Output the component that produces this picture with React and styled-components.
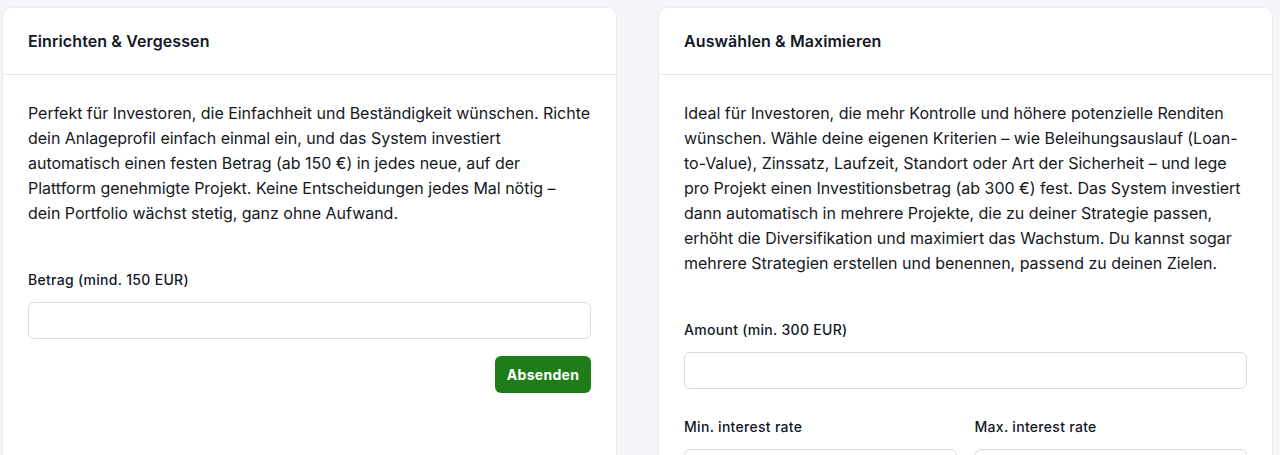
import React from "react";
import styled, { createGlobalStyle } from "styled-components";

const GlobalStyle = createGlobalStyle`
  html, body {
    margin: 0;
    padding: 0;
    background: #f3f5f9;
  }
  body {
    font-family: Inter, "Noto Sans", "Liberation Sans", sans-serif;
    color: #16181d;
    -webkit-font-smoothing: antialiased;
  }
`;

const Page = styled.div`
  display: grid;
  grid-template-columns: 613px 613px;
  column-gap: 43px;
  padding: 8px 8px 0 3px;
  height: 447px;
  overflow: hidden;
`;

const Card = styled.section`
  background: #ffffff;
  border-radius: 8px;
  box-shadow: 0 1px 2px rgba(16, 24, 40, 0.05), 0 0 0 1px rgba(16, 24, 40, 0.03);
  display: flex;
  flex-direction: column;
  min-height: 600px;
`;

const CardHeader = styled.header`
  height: 66px;
  display: flex;
  align-items: center;
  padding: 0 25px;
  border-bottom: 1px solid #e6e8ec;
`;

const Title = styled.h2`
  margin: 0;
  font-size: 16px;
  font-weight: 600;
  color: #111827;
  letter-spacing: 0.1px;
`;

const CardBody = styled.div`
  padding: 26px 25px 0;
  display: flex;
  flex-direction: column;
`;

const Text = styled.p`
  margin: 0 0 44px;
  font-size: 16px;
  line-height: 25px;
  color: #16181d;
  letter-spacing: -0.02px;
`;

const Field = styled.div`
  display: flex;
  flex-direction: column;
  margin-bottom: ${(p) => p.$gap || 0}px;
`;

const Label = styled.label`
  font-size: 14px;
  line-height: 20px;
  font-weight: 500;
  color: #111827;
  letter-spacing: 0.3px;
  margin-bottom: 12px;
`;

const Input = styled.input`
  box-sizing: border-box;
  height: 37px;
  width: 100%;
  border: 1px solid #d8dbe0;
  border-radius: 6px;
  background: #fff;
  padding: 0 12px;
  font: inherit;
  font-size: 14px;
  &:focus {
    outline: none;
    border-color: #9ca3af;
  }
`;

const Row = styled.div`
  display: grid;
  grid-template-columns: 1fr 1fr;
  column-gap: 18px;
`;

const Actions = styled.div`
  display: flex;
  justify-content: flex-end;
  margin-top: 17px;
`;

const SubmitButton = styled.button`
  height: 37px;
  width: 96px;
  border: none;
  border-radius: 6px;
  background: #1f7d19;
  color: #ffffff;
  font-family: inherit;
  font-size: 14px;
  font-weight: 700;
  letter-spacing: 0.3px;
  cursor: pointer;
`;

export default function App() {
  return (
    <>
      <GlobalStyle />
      <Page>
        <Card>
          <CardHeader>
            <Title>Einrichten &amp; Vergessen</Title>
          </CardHeader>
          <CardBody>
            <Text>
              Perfekt für Investoren, die Einfachheit und Beständigkeit wünschen.
              Richte dein Anlageprofil einfach einmal ein, und das System
              investiert automatisch einen festen Betrag (ab 150 €) in jedes
              neue, auf der Plattform genehmigte Projekt. Keine Entscheidungen
              jedes Mal nötig – dein Portfolio wächst stetig, ganz ohne Aufwand.
            </Text>
            <Field>
              <Label>Betrag (mind. 150 EUR)</Label>
              <Input type="text" />
            </Field>
            <Actions>
              <SubmitButton type="button">Absenden</SubmitButton>
            </Actions>
          </CardBody>
        </Card>

        <Card>
          <CardHeader>
            <Title>Auswählen &amp; Maximieren</Title>
          </CardHeader>
          <CardBody>
            <Text>
              Ideal für Investoren, die mehr Kontrolle und höhere potenzielle
              Renditen wünschen. Wähle deine eigenen Kriterien – wie
              Beleihungsauslauf (Loan-to-Value), Zinssatz, Laufzeit, Standort
              oder Art der Sicherheit – und lege pro Projekt einen
              Investitionsbetrag (ab 300 €) fest. Das System investiert dann
              automatisch in mehrere Projekte, die zu deiner Strategie passen,
              erhöht die Diversifikation und maximiert das Wachstum. Du kannst
              sogar mehrere Strategien erstellen und benennen, passend zu deinen
              Zielen.
            </Text>
            <Field $gap={28}>
              <Label>Amount (min. 300 EUR)</Label>
              <Input type="text" />
            </Field>
            <Row>
              <Field>
                <Label>Min. interest rate</Label>
                <Input type="text" />
              </Field>
              <Field>
                <Label>Max. interest rate</Label>
                <Input type="text" />
              </Field>
            </Row>
          </CardBody>
        </Card>
      </Page>
    </>
  );
}
